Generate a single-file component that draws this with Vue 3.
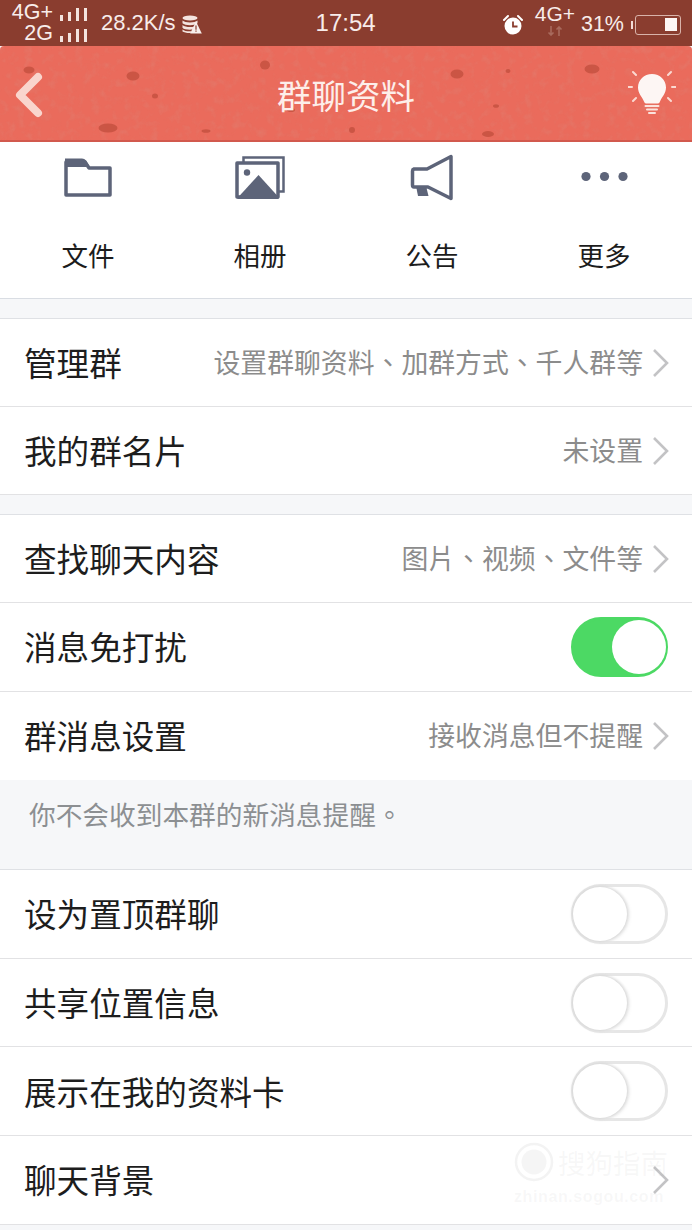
<template>
  <div class="page">
    <div class="status">
      <div class="nets">
        <div class="net-line"><span>4G+</span><i class="bars"><b></b><b></b><b></b><b></b></i></div>
        <div class="net-line"><span>2G</span><i class="bars"><b></b><b></b><b></b><b></b></i></div>
      </div>
      <span class="speed">28.2K/s</span>
      <svg class="db" viewBox="0 0 20 19" width="20" height="19">
        <ellipse cx="8" cy="3" rx="7.500" ry="2.600" fill="#f4e4df" />
        <path d="M.5 5.500c2.500 2.600 12.500 2.600 15 0v2.800c-2.500 2.600-12.500 2.600-15 0zM.5 10c2.500 2.400 9 2.600 12 1.400l-1.600 3.200c-3.500.4-9 .2-10.400-1.800zM.5 14.500c1.500 1.400 5 2 9 1.800L8.800 18c-3.500.2-7-.5-8.300-1.500z" fill="#f4e4df" />
        <path d="M14 6.500l5.800 12H8.200z" fill="#f8efec" />
        <path d="M13.400 10.500h1.200v4.200h-1.200zM13.400 15.500h1.200v1.300h-1.200z" fill="#8a3d2f" />
      </svg>
      <span class="time">17:54</span>
      <div class="status-right">
        <svg class="alarm" viewBox="0 0 22 22" width="22" height="22">
          <circle cx="11" cy="12" r="8.500" fill="#fff" />
          <path d="M11 7.500V12.500H15.500" fill="none" stroke="#8a3d2f" stroke-width="1.800" />
          <path d="M2 6l4-4M20 6l-4-4" stroke="#fff" stroke-width="2" stroke-linecap="round" />
        </svg>
        <div class="net4g">
          <span>4G+</span>
          <svg viewBox="0 0 16 10" width="16" height="10">
            <path d="M4 0v9M1.500 6.500L4 9l2.500-2.500M12 10V1M9.500 3.500L12 1l2.500 2.500" fill="none" stroke="#a86a5d" stroke-width="1.600" />
          </svg>
        </div>
        <span class="pct">31%</span>
        <i class="batt-tip"></i>
        <div class="batt"><i></i></div>
      </div>
    </div>

    <header class="head">
      <svg class="texture" viewBox="0 0 692 95" width="692" height="95">
        <filter id="grain" x="0" y="0" width="100%" height="100%">
          <feTurbulence type="fractalNoise" baseFrequency=".12" numOctaves="3" seed="4" />
          <feColorMatrix values="0 0 0 0 .72  0 0 0 0 .25  0 0 0 0 .2  1.800 0 0 0 -.85" />
        </filter>
        <rect width="692" height="95" filter="url(#grain)" opacity=".45" />
        <g fill="#c4503f" opacity=".8">
          <ellipse cx="29" cy="24" rx="5.500" ry="3.500" />
          <ellipse cx="133" cy="30" rx="6.500" ry="4.500" />
          <ellipse cx="155" cy="50" rx="3" ry="2.500" />
          <ellipse cx="108" cy="82" rx="9.500" ry="4.500" />
          <ellipse cx="206" cy="85" rx="4.500" ry="1.800" />
          <ellipse cx="265" cy="19" rx="5" ry="4.500" />
          <ellipse cx="291" cy="64" rx="4" ry="2" />
          <ellipse cx="457" cy="28" rx="6.500" ry="4.500" />
          <ellipse cx="508" cy="25" rx="2.500" ry="2" />
          <ellipse cx="496" cy="60" rx="3" ry="1.800" />
          <ellipse cx="592" cy="23" rx="7.500" ry="4.500" />
          <ellipse cx="352" cy="84" rx="3" ry="3" />
          <ellipse cx="488" cy="88" rx="6" ry="3" />
        </g>
      </svg>
      <svg class="back" viewBox="0 0 30 46" width="30" height="46">
        <path d="M24 5L6 23l18 18" fill="none" stroke="#f9d5cd" stroke-width="8" stroke-linecap="round" stroke-linejoin="round" />
      </svg>
      <h1 class="title">群聊资料</h1>
      <svg class="bulb" viewBox="0 0 48 46" width="48" height="46">
        <path d="M24 4c-8 0-14 6-14 13.500 0 6 4 9 6 14 .5 1.300 1 2 2 2h12c1 0 1.500-.7 2-2 2-5 6-8 6-14C38 10 32 4 24 4z" fill="#fdf6f4" />
        <path d="M17.500 36h13M19 39.500h10M21 43h6" stroke="#fbe3dd" stroke-width="2" stroke-linecap="round" />
        <path d="M5 2l3 3M43 2l-3 3M0 17h4M44 17h4M5 31l3-3M43 31l-3-3" stroke="#fbd9d1" stroke-width="2" stroke-linecap="round" />
      </svg>
    </header>

    <nav class="tools">
      <div class="tool">
        <svg viewBox="0 0 50 44" width="50" height="44">
          <path d="M3 6h19l4 6h21v27H3z" fill="none" stroke="#5d6479" stroke-width="3.500" stroke-linejoin="round" />
          <path d="M2 2.500h17q2.500 0 4 2l4 6.500H2z" fill="#5d6479" />
        </svg>
        <span>文件</span>
      </div>
      <div class="tool">
        <svg viewBox="0 0 50 44" width="50" height="44">
          <path d="M8.500 7V1.500h40v34H43" fill="none" stroke="#5d6479" stroke-width="2.500" />
          <rect x="2" y="7" width="41" height="34" fill="none" stroke="#5d6479" stroke-width="3.500" stroke-linejoin="round" />
          <circle cx="12" cy="16.500" r="3.200" fill="#5d6479" />
          <path d="M2.500 42l21-23 20 22v2h-41z" fill="#5d6479" />
        </svg>
        <span>相册</span>
      </div>
      <div class="tool">
        <svg viewBox="0 0 50 48" width="50" height="48">
          <path d="M44 2.500v42L21 33H7Q5.500 33 5.500 31V17q0-1.500 1.500-2H20z" fill="none" stroke="#5d6479" stroke-width="3.500" stroke-linejoin="round" />
          <path d="M9 32h10l2.500 10H11z" fill="#5d6479" />
        </svg>
        <span>公告</span>
      </div>
      <div class="tool">
        <svg viewBox="0 0 50 44" width="50" height="44">
          <circle cx="7" cy="20.500" r="4.600" fill="#5d6479" />
          <circle cx="25.500" cy="20.500" r="4.600" fill="#5d6479" />
          <circle cx="44" cy="20.500" r="4.600" fill="#5d6479" />
        </svg>
        <span>更多</span>
      </div>
    </nav>

    <template v-for="(group, g) in groups" :key="g">
      <section class="group" :class="group.cls">
        <div v-for="row in group.rows" :key="row.label" class="row">
          <span class="label">{{ row.label }}</span>
          <span v-if="row.value" class="value">{{ row.value }}</span>
          <svg v-if="row.arrow" class="chev" viewBox="0 0 18 30" width="18" height="30">
            <path d="M2 2l13 13L2 28" fill="none" stroke="#c3c3c5" stroke-width="2.600" />
          </svg>
          <div v-if="row.toggle" class="switch" :class="{ on: row.toggle === 'on' }"><i></i></div>
        </div>
      </section>
      <p v-if="group.note" class="note">{{ group.note }}</p>
    </template>

    <div class="mark">
      <div class="mark-top">
        <svg viewBox="0 0 40 40" width="40" height="40">
          <circle cx="20" cy="20" r="18" fill="none" stroke="#999" stroke-opacity=".12" stroke-width="2.500" />
          <circle cx="20" cy="20" r="12.500" fill="#999" fill-opacity=".1" />
        </svg>
        <span>搜狗指南</span>
      </div>
      <div class="mark-url">zhinan.sogou.com</div>
    </div>
  </div>
</template>

<script setup>
const groups = [
  {
    cls: 'first',
    rows: [
      { label: '管理群', value: '设置群聊资料、加群方式、千人群等', arrow: true },
      { label: '我的群名片', value: '未设置', arrow: true }
    ]
  },
  {
    cls: 'second',
    rows: [
      { label: '查找聊天内容', value: '图片、视频、文件等', arrow: true },
      { label: '消息免打扰', toggle: 'on' },
      { label: '群消息设置', value: '接收消息但不提醒', arrow: true }
    ],
    note: '你不会收到本群的新消息提醒。'
  },
  {
    cls: 'third',
    rows: [
      { label: '设为置顶群聊', toggle: 'off' },
      { label: '共享位置信息', toggle: 'off' },
      { label: '展示在我的资料卡', toggle: 'off' },
      { label: '聊天背景', arrow: true }
    ]
  }
]
</script>

<style scoped>
.page {
  position: relative;
  width: 692px;
  height: 1230px;
  overflow: hidden;
  background: #f6f7f9;
  font-family: "Noto Sans CJK SC", "Liberation Sans", sans-serif;
}

.status {
  display: flex;
  align-items: center;
  height: 46px;
  padding: 0 11px;
  box-sizing: border-box;
  background: #8a3d2f;
  color: #f8ecea;
  font-family: "Liberation Sans", sans-serif;
}

.nets {
  width: 76px;
  font-size: 21.500px;
  line-height: 21px;
}

.net-line {
  display: flex;
  justify-content: flex-end;
  align-items: flex-end;
  gap: 7px;
  height: 21px;
}

.bars {
  display: flex;
  align-items: flex-end;
  gap: 5px;
  padding-bottom: 2px;
}

.bars b {
  width: 3px;
  height: 6px;
  background: #f4e4df;
}

.bars b:nth-child(2) { height: 9px; }
.bars b:nth-child(3) { height: 13px; }
.bars b:nth-child(4) { height: 13px; }

.speed {
  margin-left: 14px;
  font-size: 22px;
}

.db {
  margin-left: 6px;
  margin-top: 2px;
}

.time {
  margin-left: 114px;
  font-size: 24px;
}

.status-right {
  display: flex;
  align-items: center;
  margin-left: auto;
}

.alarm {
  margin-right: 10px;
  margin-top: 4px;
}

.net4g {
  display: flex;
  flex-direction: column;
  align-items: center;
  width: 42px;
  font-size: 21px;
  line-height: 20px;
  margin-top: -6px;
}

.net4g svg {
  margin-top: 2px;
}

.pct {
  margin-left: 5px;
  font-size: 21.500px;
  margin-top: 3px;
}

.batt-tip {
  width: 2px;
  height: 8px;
  margin-left: 7px;
  margin-right: 2px;
  margin-top: 3px;
  background: #f2dcd7;
}

.batt {
  display: flex;
  justify-content: flex-end;
  align-items: center;
  width: 46px;
  height: 20px;
  margin-top: 3px;
  padding: 2px 3px;
  box-sizing: border-box;
  border: 1.500px solid #d9b3aa;
  border-radius: 3px;
}

.batt i {
  width: 12px;
  height: 13px;
  background: #fdf6f4;
}

.head {
  position: relative;
  display: flex;
  justify-content: center;
  align-items: center;
  height: 96px;
  padding-top: 4px;
  box-sizing: border-box;
  border-radius: 4px 4px 0 0;
  overflow: hidden;
  background: #ea6b5c;
  border-bottom: 2px solid #d2594d;
}

.texture {
  position: absolute;
  left: 0;
  top: 0;
}

.back {
  position: absolute;
  left: 14px;
  top: 26px;
}

.bulb {
  position: absolute;
  left: 628px;
  top: 24px;
}

.title {
  position: relative;
  margin: 0;
  color: #fdeeea;
  font-size: 34.500px;
  font-weight: 400;
  line-height: 1.2;
}

.tools {
  display: grid;
  grid-template-columns: repeat(4, 172px);
  justify-content: center;
  height: 157px;
  background: #fff;
  border-bottom: 1px solid #d9dde3;
  box-sizing: border-box;
}

.tool {
  display: flex;
  flex-direction: column;
  align-items: center;
  color: #1c1c1c;
  font-size: 26.500px;
  line-height: 36px;
}

.tool svg {
  display: block;
  height: 48px;
  margin-top: 12px;
}

.tool span {
  margin-top: 35px;
}

.group {
  background: #fff;
  border-top: 1px solid #dfe1e5;
}

.first {
  margin-top: 19px;
}

.second {
  margin-top: 19px;
}

.row {
  display: flex;
  align-items: center;
  padding: 0 24px;
  box-sizing: border-box;
  border-bottom: 1px solid #e2e2e4;
}

.first .row {
  height: 88px;
}

.second .row {
  height: 88.340px;
}

.third .row {
  height: 88.750px;
}

.second .row:last-child {
  border-bottom: 0;
}

.label {
  flex: 1;
  padding-bottom: 1px;
  color: #1d1d1d;
  font-size: 32.600px;
  line-height: 1;
}

.value {
  color: #8c8c8c;
  font-family: "Noto Sans CJK TC", "Liberation Sans", sans-serif;
  font-size: 26.850px;
  line-height: 1;
}

.chev {
  margin-left: 9px;
  margin-right: -2px;
}

.switch {
  display: flex;
  align-items: center;
  width: 97px;
  height: 60px;
  padding: 1px;
  box-sizing: border-box;
  border: 3px solid #e6e6e6;
  border-radius: 30px;
  background: #fff;
}

.switch i {
  width: 54px;
  height: 54px;
  margin-left: -2px;
  border-radius: 50%;
  background: #fff;
  box-shadow: 0 0 3px 1px #d6d6d6, 2px 1px 4px #ececec;
}

.switch.on {
  justify-content: flex-end;
  border-color: #4cd964;
  background: #4cd964;
}

.switch.on i {
  margin: 0 -2px 0 0;
  box-shadow: none;
}

.note {
  margin: 0;
  height: 89px;
  padding: 16px 29px 0;
  box-sizing: border-box;
  color: #8c8f92;
  font-family: "Noto Sans CJK TC", "Liberation Sans", sans-serif;
  font-size: 26.700px;
  line-height: 36px;
}

.mark {
  position: absolute;
  left: 514px;
  top: 1142px;
  color: rgba(170, 170, 170, .09);
}

.mark-top {
  display: flex;
  align-items: center;
  gap: 4px;
}

.mark-top span {
  font-size: 27.500px;
  line-height: 40px;
}

.mark-url {
  margin-top: 6px;
  font-size: 16px;
  font-weight: 700;
  letter-spacing: .6px;
  font-family: "Liberation Sans", sans-serif;
}
</style>

<style>
body {
  margin: 0;
}
</style>
